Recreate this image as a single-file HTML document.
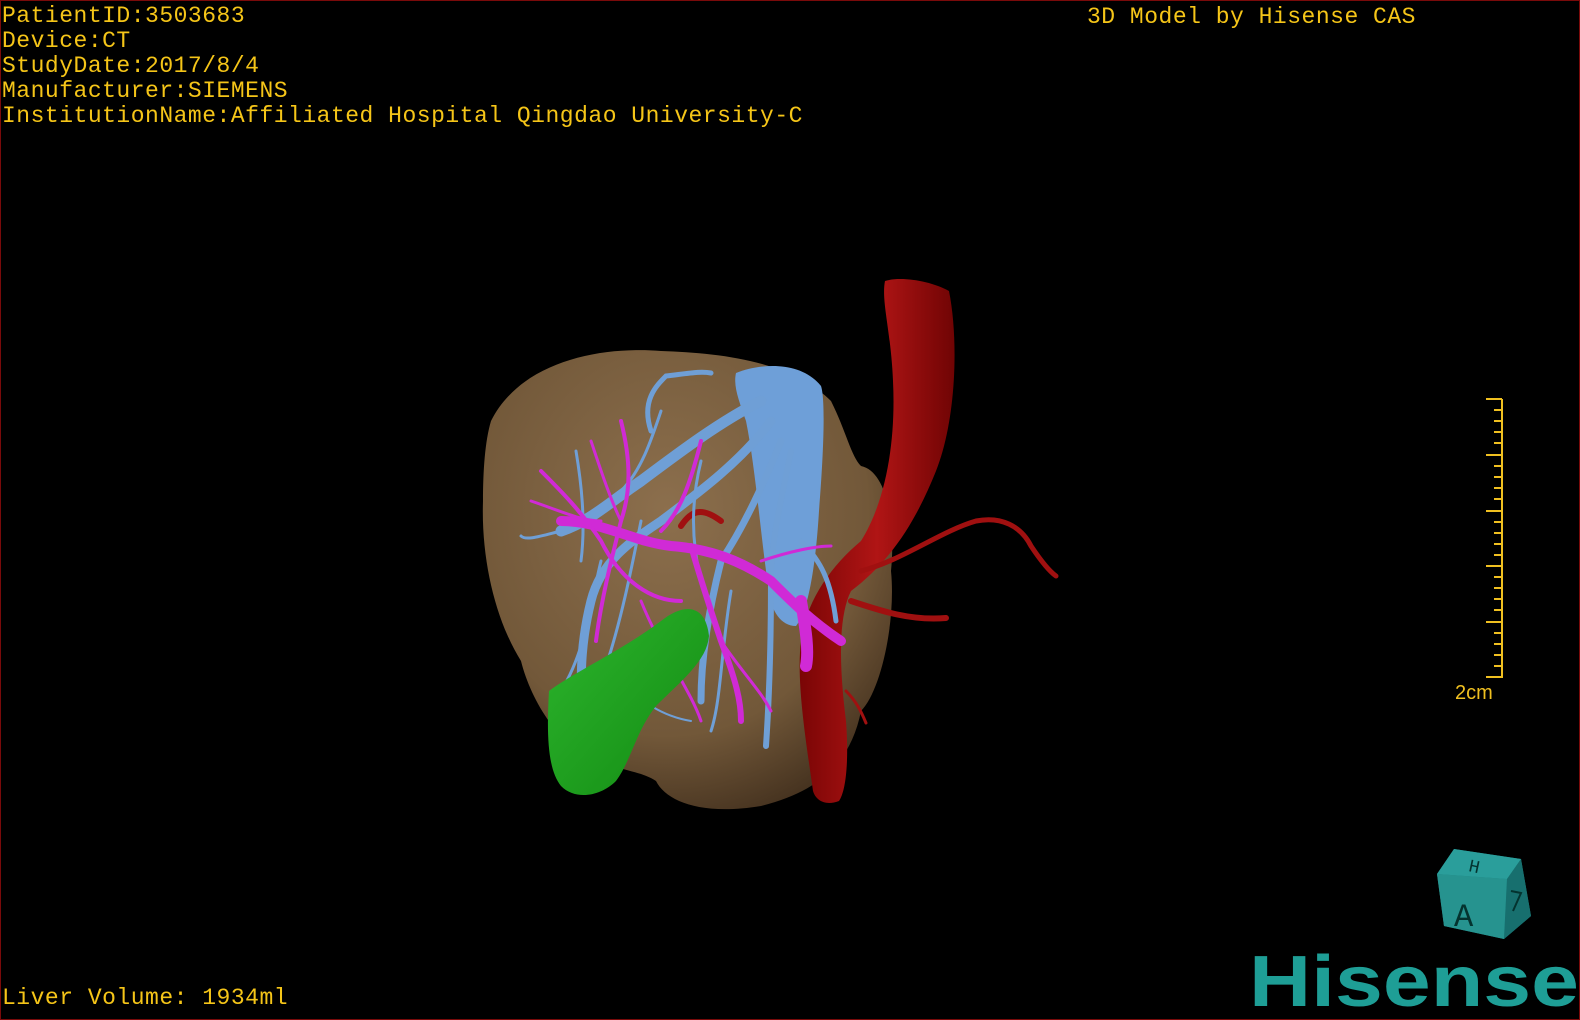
<!DOCTYPE html>
<html><head><meta charset="utf-8"><style>
html,body{margin:0;padding:0;background:#000;}
#f{position:relative;width:1578px;height:1018px;border:1px solid #7a0a0a;background:#000;overflow:hidden;}
.t{position:absolute;left:1px;color:#f5c518;font-family:"Liberation Mono",monospace;font-size:23px;line-height:25px;white-space:pre;letter-spacing:0.5px}
svg{position:absolute;left:0;top:0}
</style></head><body><div id="f">
<div class="t" style="top:3px">PatientID:3503683
Device:CT
StudyDate:2017/8/4
Manufacturer:SIEMENS
InstitutionName:Affiliated Hospital Qingdao University-C</div>
<div class="t" style="top:4px;left:1086px">3D Model by Hisense CAS</div>
<div class="t" style="top:985px">Liver Volume: 1934ml</div>
<svg width="1580" height="1020" viewBox="0 0 1580 1020">
<defs>
<radialGradient id="lv" cx="0.45" cy="0.35" r="0.7"><stop offset="0" stop-color="#8c6f4d"/><stop offset="0.7" stop-color="#725839"/><stop offset="1" stop-color="#45321f"/></radialGradient>
<linearGradient id="gb" x1="0" y1="0" x2="1" y2="1"><stop offset="0" stop-color="#2db52d"/><stop offset="1" stop-color="#128a12"/></linearGradient>
<linearGradient id="ao" x1="0" y1="0" x2="1" y2="0"><stop offset="0" stop-color="#7a0505"/><stop offset="0.5" stop-color="#b01515"/><stop offset="1" stop-color="#700404"/></linearGradient>
</defs>
<path d="M490,420 C520,360 600,345 660,350 C720,352 790,360 830,400 C845,430 850,455 860,465 C885,470 895,520 890,570 C895,620 880,690 860,710 C850,760 820,790 760,805 C700,815 665,800 655,780 C640,770 620,770 600,760 C560,750 530,700 520,660 C495,620 480,560 482,500 C482,470 484,440 490,420 Z" fill="url(#lv)"/>
<path d="M884,280 C900,275 930,280 948,290 C958,340 955,420 935,470 C915,520 890,560 850,590 C835,620 840,680 845,720 C848,760 845,790 838,800 C825,805 815,800 812,790 C805,740 795,680 800,640 C805,600 830,565 860,540 C885,500 895,440 892,380 C890,330 880,300 884,280 Z" fill="url(#ao)"/>
<g fill="none" stroke="#a01010" stroke-linecap="round">
<path d="M860,570 C900,560 940,530 975,520 C1000,515 1020,525 1030,545 C1040,560 1048,570 1055,575" stroke-width="5"/>
<path d="M850,600 C880,610 910,620 945,617" stroke-width="6"/>
<path d="M845,690 C855,700 860,710 865,722" stroke-width="3"/>
<path d="M720,520 C700,505 690,510 680,525" stroke-width="6"/>
</g>
<path d="M735,372 C760,362 800,360 820,385 C825,400 822,460 818,510 C815,560 808,610 795,625 C780,625 770,610 768,590 C760,540 755,470 745,420 C738,400 732,385 735,372 Z" fill="#6e9fd8"/>
<g fill="none" stroke="#6f9fd6" stroke-linecap="round">
<path d="M760,400 C720,420 680,450 640,480 C610,500 590,520 560,530" stroke-width="11"/>
<path d="M770,420 C740,460 700,490 660,520 C630,540 600,560 590,600 C580,640 580,670 580,700" stroke-width="9"/>
<path d="M780,440 C760,490 740,530 720,560 C710,600 700,650 700,700" stroke-width="7"/>
<path d="M790,450 C780,500 770,540 770,580 C770,640 768,700 765,745" stroke-width="6"/>
<path d="M800,540 C820,560 830,580 835,620" stroke-width="5"/>
<path d="M650,430 C640,400 655,385 665,375 C690,372 700,370 710,372" stroke-width="5"/>
<path d="M560,530 C540,535 525,540 520,535" stroke-width="3"/>
<path d="M600,560 C590,600 585,650 560,690" stroke-width="3"/>
<path d="M640,520 C630,570 620,620 605,665" stroke-width="3"/>
<path d="M730,590 C720,650 720,700 710,730" stroke-width="3"/>
<path d="M660,410 C650,440 640,470 620,490" stroke-width="3"/>
<path d="M700,460 C690,500 690,540 700,580" stroke-width="3"/>
<path d="M575,450 C580,480 585,520 580,560" stroke-width="3"/>
<path d="M620,680 C640,700 660,715 690,720" stroke-width="2"/>
</g>
<g fill="none" stroke="#d02ad6" stroke-linecap="round">
<path d="M560,520 C600,520 630,540 670,545 C710,548 740,560 770,580 C790,600 810,620 840,640" stroke-width="10"/>
<path d="M800,600 C805,630 808,650 805,665" stroke-width="12"/>
<path d="M690,545 C700,580 710,610 720,640 C735,680 740,700 740,720" stroke-width="6"/>
<path d="M620,420 C630,460 630,490 620,520 C610,560 600,600 595,640" stroke-width="4"/>
<path d="M700,440 C690,480 680,510 660,530" stroke-width="4"/>
<path d="M540,470 C560,490 580,510 600,540 C620,580 650,600 680,600" stroke-width="4"/>
<path d="M590,440 C600,470 610,500 620,520" stroke-width="3"/>
<path d="M530,500 C560,510 580,520 600,520" stroke-width="3"/>
<path d="M640,600 C660,650 690,690 700,720" stroke-width="3"/>
<path d="M760,560 C790,550 815,545 830,545" stroke-width="3"/>
<path d="M720,640 C740,670 760,690 770,710" stroke-width="3"/>
</g>
<path d="M548,690 C575,670 620,650 660,620 C685,600 705,605 708,635 C706,660 680,680 655,705 C635,730 630,760 615,780 C600,795 575,800 560,785 C548,770 545,740 548,690 Z" fill="url(#gb)"/>
<g stroke="#f0c020" stroke-width="2" fill="none">
<path d="M1501,398 V677"/>
<path d="M1485,398H1501M1493,409H1501M1493,420H1501M1493,431H1501M1493,442H1501M1485,454H1501M1493,465H1501M1493,476H1501M1493,487H1501M1493,498H1501M1485,510H1501M1493,521H1501M1493,532H1501M1493,543H1501M1493,554H1501M1485,565H1501M1493,576H1501M1493,587H1501M1493,598H1501M1493,609H1501M1485,621H1501M1493,632H1501M1493,643H1501M1493,654H1501M1493,665H1501M1485,676H1501"/>
</g>
<text x="1454" y="698" fill="#f0c020" font-family="Liberation Sans,sans-serif" font-size="20">2cm</text>
<polygon points="1453,848 1520,858 1530,915 1503,938 1443,925 1436,873" fill="#1d8584"/>
<polygon points="1453,848 1520,858 1506,878 1436,873" fill="#2a9e9b"/>
<polygon points="1436,873 1506,878 1503,938 1443,925" fill="#26938f"/>
<polygon points="1506,878 1520,858 1530,915 1503,938" fill="#176f6e"/>
<text x="1453" y="925" font-family="Liberation Mono,monospace" font-size="32" fill="#04332f">A</text>
<text x="1468" y="871" font-family="Liberation Mono,monospace" font-size="18" fill="#04332f" transform="rotate(12 1472 865)">H</text>
<path d="M1510,890 L1520,892 L1512,910" stroke="#04332f" stroke-width="2" fill="none"/>
<text x="1248" y="1005" font-family="Liberation Sans,sans-serif" font-weight="bold" font-size="72" fill="#1e9e96" textLength="330" lengthAdjust="spacingAndGlyphs">Hisense</text>
</svg>
</div></body></html>
